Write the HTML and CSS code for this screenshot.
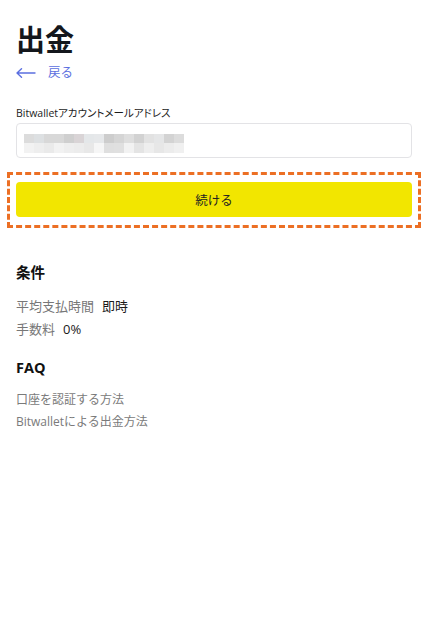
FILE: index.html
```html
<!DOCTYPE html>
<html lang="ja">
<head>
    <meta charset="UTF-8">
    <meta name="viewport" content="width=device-width, initial-scale=1.0">
    <title>出金</title>
    <link rel="stylesheet" href="styles.css">
</head>
<body>

    <div class="page">
        <h1>出金</h1>
        <a class="back" href="#">
            <svg width="20" height="10" viewBox="0 0 20 10">
                <path d="M1 5 H19 M5.5 0.8 L1 5 L5.5 9.2" fill="none" stroke="#5b6fe0" stroke-width="1.4" stroke-linecap="round" stroke-linejoin="round"/>
            </svg>
            <span>戻る</span>
        </a>

        <!-- アドレス入力 -->
        <label class="field-label" for="email">Bitwalletアカウントメールアドレス</label>
        <div class="input">
            <div class="masked"></div>
        </div>

        <div class="highlight">
            <button class="submit">続ける</button>
        </div>

        <h2>条件</h2>
        <p class="row"><span class="key">平均支払時間</span><span class="val">即時</span></p>
        <p class="row"><span class="key">手数料</span><span class="val">0%</span></p>

        <h2 class="faq">FAQ</h2>
        <p class="link">口座を認証する方法</p>
        <p class="link">Bitwalletによる出金方法</p>
    </div>

</body>
</html>
```

FILE: styles.css
```css
body {
    margin: 0;
    background: #fff;
    font-family: 'Open Sans', 'Noto Sans CJK JP', sans-serif;
    color: #1a1a1a;
}
.page {
    padding: 16px 10px 0 16px;
}
h1 {
    margin: 0;
    font-family: 'Noto Sans CJK JP', sans-serif;
    font-size: 29px;
    font-weight: bold;
    line-height: 44px;
    color: #14171c;
}
.back {
    display: flex;
    align-items: center;
    gap: 12px;
    margin-top: 4px;
    text-decoration: none;
    color: #5b6fe0;
    font-size: 12.5px;
    line-height: 18px;
}
.field-label {
    display: block;
    margin-top: 23px;
    font-size: 10.5px;
    line-height: 16px;
    color: #1c1c1c;
    font-feature-settings: "palt";
}
.input {
    box-sizing: border-box;
    height: 35px;
    margin-top: 2px;
    border: 1px solid #e3e3e6;
    border-radius: 4px;
    padding: 10px 0 0 7px;
}
.masked {
    width: 160px;
    height: 19px;
    background:
        linear-gradient(to right,
            #dcdcdc 0 10px, #dde0e2 10px 20px, #d8d8d8 20px 40px, #cfcfcf 40px 50px,
            #d9d4d6 50px 60px, #e4e7e9 60px 70px, #e6e8ea 70px 80px, #cdcdcd 80px 90px,
            #d5d5d5 90px 100px, #dedede 100px 110px, #d2d2d2 110px 120px, #e2e2e2 120px 130px,
            #e5e6e7 130px 140px, #d3d3d3 140px 150px, #dcdcdc 150px 160px) top / 100% 9px no-repeat,
        linear-gradient(to right,
            #f2f2f2 0 10px, #eeeeee 10px 20px, #eaeaea 20px 30px, #f2f2f2 30px 40px,
            #eeeeee 40px 50px, #ececec 50px 60px, #e8e8e8 60px 70px, #f6f6f6 70px 80px,
            #dfdfdf 80px 90px, #e0e0e0 90px 100px, #f2f2f2 100px 110px, #e4e4e4 110px 120px,
            #eeeeee 120px 130px, #e7e7e7 130px 140px, #ececec 140px 150px, #f0f0f0 150px 160px) bottom / 100% 10px no-repeat;
}
.highlight {
    margin: 14px -9px 0 -9px;
    padding: 7px 6px 8px 6px;
    border: 3px dashed #ec6f24;
}
.submit {
    display: block;
    width: 100%;
    height: 35px;
    border: none;
    border-radius: 4px;
    background: #f2e600;
    font-family: inherit;
    font-size: 12.5px;
    color: #222;
    cursor: pointer;
}
h2 {
    margin: 34px 0 0;
    font-size: 14.5px;
    font-weight: bold;
    line-height: 22px;
    color: #111;
}
h2.faq {
    margin-top: 16px;
}
.row {
    margin: 0;
    font-size: 13px;
    line-height: 23px;
}
h2 + .row {
    margin-top: 11px;
}
.key {
    color: #777;
    margin-right: 8px;
}
.val {
    color: #1a1a1a;
}
.link {
    margin: 0;
    font-size: 12px;
    line-height: 22px;
    color: #7a7a7a;
}
h2 + .link {
    margin-top: 10px;
}
```
